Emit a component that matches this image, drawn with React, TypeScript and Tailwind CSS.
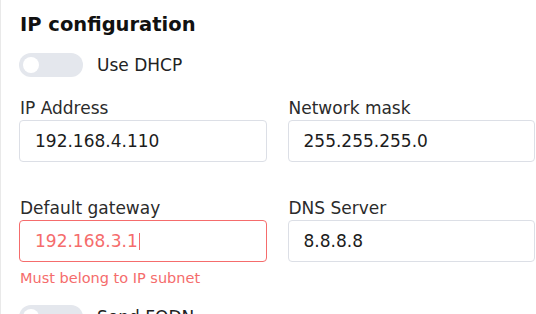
import React from 'react';

const Toggle = ({ label }: { label: string }) => (
  <div className="flex items-center h-6">
    <div className="relative w-16 h-6 rounded-full bg-[#e4e7ed] shrink-0">
      <div className="absolute left-1 top-1 w-4 h-4 rounded-full bg-white" />
    </div>
    <span className="ml-[14px] text-[17px] leading-5 text-[#222]">{label}</span>
  </div>
);

const Field = ({
  label,
  value,
  error,
}: {
  label: string;
  value: string;
  error?: string;
}) => (
  <div className="flex flex-col">
    <label className="text-[17px] leading-5 text-[#2b2b2b] pl-px mb-[2px]">{label}</label>
    <div
      className={
        error
          ? 'flex items-center h-[42px] rounded-[4px] border border-[#f56c6c] pl-[15px]'
          : 'flex items-center h-[42px] rounded-[4px] border border-[#dcdfe6] pl-[15px]'
      }
    >
      <span
        className={
          error
            ? 'text-[17px] leading-5 text-[#f56c6c] flex items-center'
            : 'text-[17px] leading-5 text-[#1c1c1c] flex items-center'
        }
      >
        {value}
        {error && <span className="inline-block w-px h-[17px] bg-[#f56c6c] ml-px" />}
      </span>
    </div>
    {error && (
      <p className="mt-[7px] text-[14.5px] leading-[18px] text-[#f56c6c] pl-px">{error}</p>
    )}
  </div>
);

export default function App() {
  return (
    <div
      className="w-[536px] h-[314px] overflow-hidden bg-white border-l border-[#e9e9e9] pl-[18px] pr-px"
      style={{ fontFamily: '"DejaVu Sans", Verdana, sans-serif' }}
    >
      <h2 className="pt-[13px] text-[19.5px] leading-6 font-bold text-[#111] pl-px">
        IP configuration
      </h2>

      <div className="mt-4">
        <Toggle label="Use DHCP" />
      </div>

      <div className="mt-[21px] grid grid-cols-2 gap-x-[21px] gap-y-9 items-start">
        <Field label="IP Address" value="192.168.4.110" />
        <Field label="Network mask" value="255.255.255.0" />
        <Field label="Default gateway" value="192.168.3.1" error="Must belong to IP subnet" />
        <Field label="DNS Server" value="8.8.8.8" />
      </div>

      <div className="mt-[18px]">
        <Toggle label="Send FQDN" />
      </div>
    </div>
  );
}
